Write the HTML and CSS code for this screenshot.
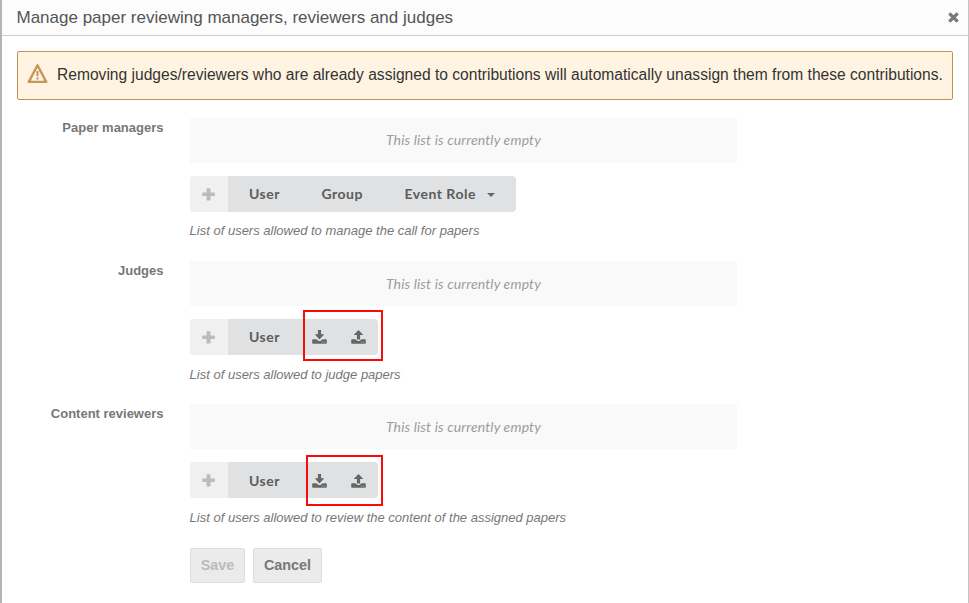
FILE: index.html
```html
<!DOCTYPE html>
<html lang="en">
<head>
<meta charset="utf-8">
<title>Manage paper reviewing managers, reviewers and judges</title>
<link rel="stylesheet" href="styles.css">
</head>
<body>
<svg class="defs" width="0" height="0" aria-hidden="true">
  <symbol id="plus" viewBox="0 0 13 13"><path d="M5.200 0.200h2.600q.7 0 .7.7v3.600h3.600q.7 0 .7.7v2.200q0 .7-.7.7H8.500v3.600q0 .7-.7.7H5.200q-.7 0-.7-.7V8.100H.9q-.7 0-.7-.7V5.200q0-.7.7-.7h3.600V.9q0-.7.7-.7z"/></symbol>
  <symbol id="tray" viewBox="0 0 15 14"><path fill-rule="evenodd" d="M1 9.300h3.300l1.600 1.300q1.600 1 3.200 0l1.600-1.300H14q.8 0 .8.800v2.900q0 .8-.8.800H1q-.8 0-.8-.8v-2.900q0-.8.8-.8zM10 11.800v.7h.8v-.7zM12.200 11.800v.7h.8v-.7z"/></symbol>
  <symbol id="download" viewBox="0 0 15 14"><use href="#tray"/><path d="M5.900 0h3.200v4.300h3.200L7.500 9.400 2.700 4.300h3.200z"/></symbol>
  <symbol id="upload" viewBox="0 0 15 14"><use href="#tray"/><path d="M5.900 9.400h3.200V5.100h3.200L7.500 0 2.700 5.100h3.200z"/></symbol>
</svg>
<div class="dialog">
  <header class="titlebar">
    <h1>Manage paper reviewing managers, reviewers and judges</h1>
    <svg class="close" viewBox="0 0 10 10"><path d="M1.200 1.200l7.600 7.600M8.800 1.200l-7.600 7.600"/></svg>
  </header>
  <main class="content">
    <div class="warning">
      <svg class="warning-icon" viewBox="0 0 20 20"><path class="outline" d="M10 2.200L18.300 18H1.700z"/><path class="mark" d="M10 7.500v5M10 13.700v2"/></svg>
      <span>Removing judges/reviewers who are already assigned to contributions will automatically unassign them from these contributions.</span>
    </div>
    <form>
      <div class="field">
        <label>Paper managers</label>
        <div class="control">
          <div class="empty"><span>This list is currently empty</span></div>
          <div class="group">
            <span class="add"><svg><use href="#plus"/></svg></span>
            <span class="item user">User</span>
            <span class="item people">Group</span>
            <span class="item role">Event Role<i class="caret"></i></span>
          </div>
          <p>List of users allowed to manage the call for papers</p>
        </div>
      </div>
      <div class="field">
        <label>Judges</label>
        <div class="control">
          <div class="empty low"><span>This list is currently empty</span></div>
          <div class="group">
            <span class="add"><svg><use href="#plus"/></svg></span>
            <span class="item user">User</span>
            <span class="tool"><svg><use href="#download"/></svg></span>
            <span class="tool"><svg><use href="#upload"/></svg></span>
            <span class="highlight"></span>
          </div>
          <p class="low">List of users allowed to judge papers</p>
        </div>
      </div>
      <div class="field">
        <label>Content reviewers</label>
        <div class="control">
          <div class="empty low"><span>This list is currently empty</span></div>
          <div class="group low">
            <span class="add"><svg><use href="#plus"/></svg></span>
            <span class="item user">User</span>
            <span class="tool"><svg><use href="#download"/></svg></span>
            <span class="tool"><svg><use href="#upload"/></svg></span>
            <span class="highlight narrow"></span>
          </div>
          <p class="low">List of users allowed to review the content of the assigned papers</p>
        </div>
      </div>
      <div class="actions">
        <button type="button" class="save" disabled>Save</button>
        <button type="button" class="cancel">Cancel</button>
      </div>
    </form>
  </main>
</div>
</body>
</html>
```
FILE: styles.css
```css
* { box-sizing: border-box; }
body {
  margin: 0;
  height: 603px;
  overflow: hidden;
  background: #fff;
  font-family: "Liberation Sans", Arial, sans-serif;
}
.defs { position: absolute; }
.dialog {
  height: 603px;
  border-left: 2px solid #b4b4b4;
  border-right: 1px solid #c4c4c4;
}
.titlebar {
  display: flex;
  align-items: center;
  justify-content: space-between;
  height: 36px;
  padding: 0 9px 0 14.500px;
  background: #fcfcfc;
  border-bottom: 1px solid #ccc;
}
h1 {
  margin: 0;
  font-size: 17px;
  line-height: 20px;
  font-weight: 400;
  color: #555;
  white-space: nowrap;
}
.close { width: 11px; height: 11px; }
.close path { stroke: #777; stroke-width: 2.900; fill: none; }
.content { padding: 15px 15px 0; }
.warning {
  display: flex;
  align-items: center;
  height: 49px;
  padding: 0 0 2px 9px;
  border: 1px solid #c6914f;
  border-radius: 2px;
  background: #fff3e2;
  color: #333;
  font-size: 15.600px;
  white-space: nowrap;
}
.warning-icon { width: 21px; height: 21px; margin: -2px 9px 0 0; flex: none; }
.warning-icon path { fill: none; stroke: #c6965a; stroke-width: 2.300; stroke-linejoin: round; }
.warning-icon .mark { stroke-width: 2; }
form { padding-top: 18px; }
.field { display: flex; height: 143px; }
label {
  width: 146.500px;
  margin-right: 26.500px;
  padding-top: 2px;
  font-size: 13px;
  line-height: 15px;
  font-weight: 700;
  text-align: right;
  color: #777;
}
.control { width: 547px; }
.empty {
  display: flex;
  align-items: center;
  justify-content: center;
  height: 45px;
  margin-bottom: 13px;
  padding-bottom: 1px;
  background: #f9f9f9;
  color: #9c9c9c;
  font: italic 14px/20px Lato, sans-serif;
}
.empty.low { padding: 1px 0 0; }
.empty span { letter-spacing: .15px; }
.group {
  position: relative;
  display: flex;
  align-items: center;
  width: max-content;
  height: 36px;
  border-radius: 4px;
  background: #dfe1e2;
  color: #5c5c5c;
  font: 700 14px/20px Lato, sans-serif;
}
.add {
  display: flex;
  align-items: center;
  justify-content: center;
  width: 38px;
  height: 36px;
  padding-right: 1px;
  border-radius: 4px 0 0 4px;
  background: #f0f0f0;
}
.add svg { width: 13px; height: 13px; fill: #bbb; }
.item {
  display: flex;
  align-items: center;
  padding-left: 21px;
  letter-spacing: .5px;
  white-space: nowrap;
}
.user { width: 72px; }
.people { width: 83px; padding-left: 21.500px; }
.role { width: 133px; padding-left: 21.500px; }
.caret {
  margin: 1px 0 0 11px;
  border: 4px solid transparent;
  border-top-color: #666;
  border-bottom: 0;
}
.tool { display: flex; width: 39px; padding-left: 12px; }
.tool svg { width: 15px; height: 14px; fill: #666; }
.group.low .add { padding-top: 1px; }
.group.low .item,
.group.low .tool { padding-top: 2px; }
.highlight {
  position: absolute;
  left: 113px;
  top: -9px;
  width: 80px;
  height: 51px;
  border: 2px solid #f80b0b;
}
.highlight.narrow { left: 115.500px; top: -7px; width: 77.500px; }
.control p {
  margin: 11px 0 0 -.4px;
  font-size: 13px;
  line-height: 16px;
  font-style: italic;
  color: #777;
}
.control p.low { margin-top: 12px; }
.actions { display: flex; gap: 8px; margin: 1px 0 0 173px; }
button {
  height: 35px;
  padding: 0 0 2px;
  border: 1px solid #ddd;
  border-radius: 2px;
  background: #ebebeb;
  color: #777;
  font: 700 14.400px "Liberation Sans", Arial, sans-serif;
}
.save { width: 55px; color: #bbb; }
.cancel { width: 69px; }
```
